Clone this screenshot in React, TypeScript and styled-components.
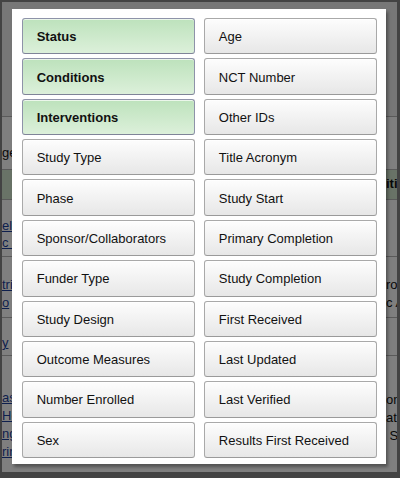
import React from "react";
import styled, { createGlobalStyle } from "styled-components";

const GlobalStyle = createGlobalStyle`
    html, body {
        margin: 0;
        padding: 0;
        background: #3c3c3c;
    }
    * {
        box-sizing: border-box;
    }
`

const Sframe = styled.div`
    position: relative;
    width: 400px;
    height: 478px;
    overflow: hidden;
    border-style: solid;
    border-color: #434343;
    border-width: 2px 3px 6px 2px;
    font-family: "Liberation Sans", Arial, sans-serif;
    font-size: 13px;
    background: #ffffff;
`

// page that sits behind the dim layer
const Spage = styled.div`
    display: flex;
    flex-direction: column;
    height: 100%;
`

const Srow = styled.div<{ $h: number; $bg?: string; $line?: boolean }>`
    display: grid;
    grid-template-columns: 10px 1fr 11px;
    height: ${(p) => p.$h}px;
    flex: none;
    background: ${(p) => p.$bg || "#ffffff"};
    border-bottom: ${(p) => (p.$line ? "1px solid #b4b4b4" : "none")};
`

const SleftCell = styled.div<{ $top: number; $lh: number }>`
    display: flex;
    flex-direction: column;
    align-items: flex-start;
    padding-top: ${(p) => p.$top}px;
    line-height: ${(p) => p.$lh}px;
    white-space: nowrap;
`

const SrightCell = styled.div<{ $top: number; $lh: number; $bold?: boolean }>`
    display: flex;
    flex-direction: column;
    align-items: flex-start;
    overflow: hidden;
    padding-top: ${(p) => p.$top}px;
    line-height: ${(p) => p.$lh}px;
    white-space: nowrap;
    font-weight: ${(p) => (p.$bold ? "bold" : "normal")};
    color: #111;
`

const Slink = styled.span`
    color: #1c3f9a;
    text-decoration: underline;
`

const Splain = styled.span`
    color: #111;
`

const Sdim = styled.div`
    position: absolute;
    inset: 0;
    background: rgba(0, 0, 0, 0.5);
    display: flex;
    align-items: flex-start;
    padding: 7px 0 0 10px;
`

const Smodal = styled.div`
    width: 374px;
    height: 455px;
    background: #ffffff;
    box-shadow: 2px 3px 3px rgba(0, 0, 0, 0.35);
    padding: 9px 9px 6px 9.7px;
    display: grid;
    grid-template-columns: 1fr 1fr;
    grid-template-rows: repeat(11, 1fr);
    grid-auto-flow: column;
    column-gap: 9px;
    row-gap: 4px;
`

const Sbtn = styled.div<{ $on?: boolean }>`
    display: flex;
    align-items: center;
    padding-left: 14px;
    padding-top: 1px;
    border: 1px solid ${(p) => (p.$on ? "#8e93a9" : "#a9a9a9")};
    border-bottom-color: ${(p) => (p.$on ? "#7f8498" : "#9a9a9a")};
    border-radius: 3px;
    background: ${(p) =>
        p.$on
            ? "linear-gradient(#bde2bc, #dcf0da)"
            : "linear-gradient(#fdfdfd, #e7e7e7)"};
    box-shadow: inset 0 1px 0 rgba(255, 255, 255, 0.7);
    color: #111;
    font-weight: ${(p) => (p.$on ? "bold" : "normal")};
    white-space: nowrap;
    cursor: pointer;
`

const leftCol = [
    "Status",
    "Conditions",
    "Interventions",
    "Study Type",
    "Phase",
    "Sponsor/Collaborators",
    "Funder Type",
    "Study Design",
    "Outcome Measures",
    "Number Enrolled",
    "Sex",
]

const rightCol = [
    "Age",
    "NCT Number",
    "Other IDs",
    "Title Acronym",
    "Study Start",
    "Primary Completion",
    "Study Completion",
    "First Received",
    "Last Updated",
    "Last Verified",
    "Results First Received",
]

const shown = ["Status", "Conditions", "Interventions"]

const App = () => {
    return (
        <>
            <GlobalStyle />
            <Sframe>
                <Spage>
                    <Srow $h={115} $bg="#efefef" $line>
                        <div />
                        <div />
                        <div />
                    </Srow>
                    <Srow $h={53} $line>
                        <SleftCell $top={28} $lh={16}>
                            <Splain>ge</Splain>
                        </SleftCell>
                        <div />
                        <div />
                    </Srow>
                    <Srow $h={30} $bg="#d3e6cf" $line>
                        <div />
                        <div />
                        <SrightCell $top={6} $lh={16} $bold>
                            <span>iti</span>
                        </SrightCell>
                    </Srow>
                    <Srow $h={57} $line>
                        <SleftCell $top={17} $lh={17}>
                            <Slink>el</Slink>
                            <Slink>c S</Slink>
                        </SleftCell>
                        <div />
                        <div />
                    </Srow>
                    <Srow $h={61} $line>
                        <SleftCell $top={19} $lh={18}>
                            <Slink>tri</Slink>
                            <Slink>o</Slink>
                        </SleftCell>
                        <div />
                        <SrightCell $top={19} $lh={18}>
                            <span>ro</span>
                            <span>c A</span>
                        </SrightCell>
                    </Srow>
                    <Srow $h={38} $line>
                        <SleftCell $top={16} $lh={18}>
                            <Slink>y</Slink>
                        </SleftCell>
                        <div />
                        <div />
                    </Srow>
                    <Srow $h={120}>
                        <SleftCell $top={33} $lh={18}>
                            <Slink>as</Slink>
                            <Slink>He</Slink>
                            <Slink>ng</Slink>
                            <Slink>rir</Slink>
                        </SleftCell>
                        <div />
                        <SrightCell $top={35} $lh={18}>
                            <span>on;</span>
                            <span>ath</span>
                            <span>&nbsp;S</span>
                        </SrightCell>
                    </Srow>
                </Spage>
                <Sdim>
                    <Smodal>
                        {leftCol.map((t) => (
                            <Sbtn key={t} $on={shown.includes(t)}>
                                {t}
                            </Sbtn>
                        ))}
                        {rightCol.map((t) => (
                            <Sbtn key={t}>{t}</Sbtn>
                        ))}
                    </Smodal>
                </Sdim>
            </Sframe>
        </>
    )
}

export default App;
